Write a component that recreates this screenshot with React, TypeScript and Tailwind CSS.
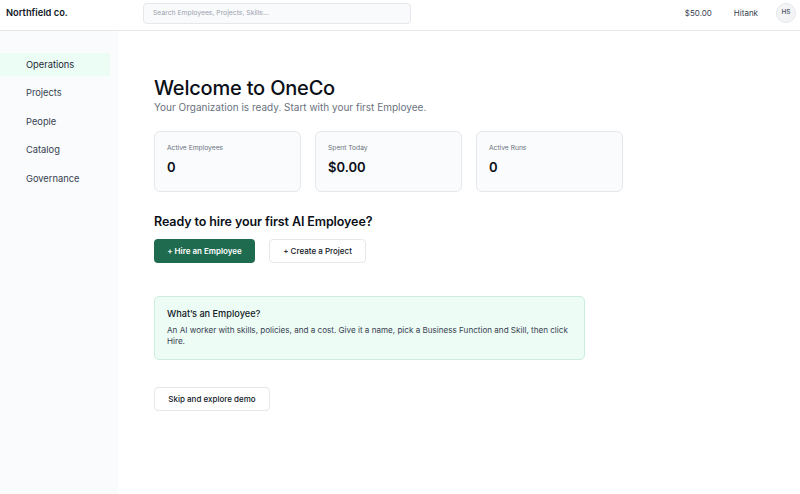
const navItems = ["Operations", "Projects", "People", "Catalog", "Governance"];

const stats = [
  { label: "Active Employees", value: "0" },
  { label: "Spent Today", value: "$0.00" },
  { label: "Active Runs", value: "0" },
];

export default function App() {
  return (
    <div
      className="h-[494px] w-[800px] bg-white text-[#111827] flex flex-col overflow-hidden"
      style={{ fontFamily: "Inter, 'Noto Sans', sans-serif" }}
    >
      {/* top bar */}
      <header className="h-[31px] shrink-0 flex items-center border-b border-[#e5e7eb] pl-[6px] pr-[4px]">
        <div className="w-[137px] text-[9.3px] font-semibold mb-[5px]">Northfield co.</div>
        <div className="w-[268px] h-[21px] mb-[4px] rounded-[4px] border border-[#e5e7eb] bg-[#f9fafb] flex items-center px-[9px] text-[6.8px] text-[#9ca3af]">
          Search Employees, Projects, Skills...
        </div>
        <div className="ml-auto flex items-center mb-[4px]">
          <span className="text-[8px] text-[#374151]">$50.00</span>
          <span className="ml-[22px] text-[8px] text-[#374151]">Hitank</span>
          <div className="ml-[18px] w-[20px] h-[20px] rounded-full bg-[#f3f4f6] border border-[#e5e7eb] flex items-center justify-center text-[6.5px] font-medium text-[#4b5563]">
            HS
          </div>
        </div>
      </header>

      <div className="flex flex-1 min-h-0">
        {/* sidebar */}
        <aside className="w-[118px] shrink-0 bg-[#f9fbfc] pt-[22px] pr-[8px] flex flex-col gap-[5.5px]">
          {navItems.map((item, i) => (
            <div
              key={item}
              className={
                i === 0
                  ? "h-[23px] flex items-center pl-[26px] text-[9.3px] text-[#1f2937] bg-[#ecfdf5]"
                  : "h-[23px] flex items-center pl-[26px] text-[9.3px] text-[#374151]"
              }
            >
              {item}
            </div>
          ))}
        </aside>

        {/* main */}
        <main className="flex-1 pl-[36px] pt-[45px]">
          <h1 className="text-[20px] leading-[24px] font-medium tracking-[-0.2px] text-[#0b0f17]">Welcome to OneCo</h1>
          <p className="text-[10px] leading-[14px] text-[#6b7280]">
            Your Organization is ready. Start with your first Employee.
          </p>

          <div className="mt-[17px] flex gap-[14px]">
            {stats.map((s) => (
              <div
                key={s.label}
                className="w-[147px] h-[61px] rounded-[6px] border border-[#e5e7eb] bg-[#fafbfc] pl-[12px] pt-[11px]"
              >
                <div className="text-[6.7px] leading-[10px] text-[#6b7280]">{s.label}</div>
                <div className="mt-[6px] text-[13px] leading-[16px] font-semibold text-[#0b0f17]">{s.value}</div>
              </div>
            ))}
          </div>

          <h2 className="mt-[22px] text-[12.5px] leading-[16px] font-semibold tracking-[-0.1px] text-[#0b0f17]">
            Ready to hire your first AI Employee?
          </h2>
          <div className="mt-[9px] flex gap-[14px]">
            <button className="w-[101px] h-[24px] rounded-[4px] bg-[#1f6b50] text-white text-[8px] font-semibold">
              + Hire an Employee
            </button>
            <button className="w-[97px] h-[24px] rounded-[4px] border border-[#e5e7eb] bg-white text-[8px] font-medium text-[#111827]">
              + Create a Project
            </button>
          </div>

          <div className="mt-[33px] w-[431px] h-[64px] rounded-[5px] border border-[#cdeedd] bg-[#edfcf4] px-[12px] pt-[10px]">
            <div className="text-[9.2px] leading-[13px] font-medium">What’s an Employee?</div>
            <p className="mt-[5px] text-[8.1px] leading-[11px] text-[#374151]">
              An AI worker with skills, policies, and a cost. Give it a name, pick a Business Function and Skill, then click Hire.
            </p>
          </div>

          <button className="mt-[27px] w-[116px] h-[24px] rounded-[4px] border border-[#e5e7eb] bg-white text-[8px] font-medium">
            Skip and explore demo
          </button>
        </main>
      </div>
    </div>
  );
}
